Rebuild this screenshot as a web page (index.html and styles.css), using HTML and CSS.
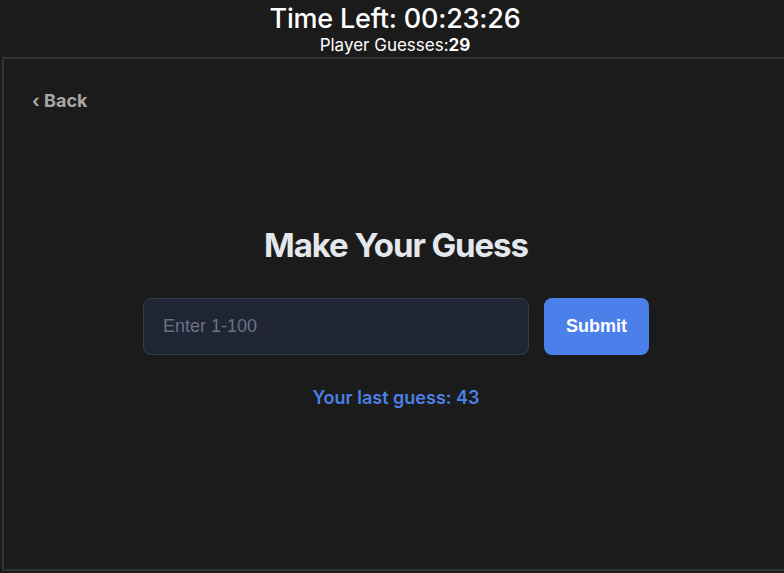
FILE: index.html
```html
<!DOCTYPE html>
<html lang="en">
<head>
  <meta charset="UTF-8">
  <meta name="viewport" content="width=device-width, initial-scale=1.0">
  <title>Guess the Number</title>
  <link rel="stylesheet" href="styles.css">
</head>
<body>
  <div class="page">
    <header class="status-bar">
      <div class="timer">Time Left: 00:23:26</div>
      <div class="guesses">Player Guesses:<strong>29</strong></div>
    </header>

    <main class="panel">
      <a class="back" href="#">&#8249; Back</a>

      <section class="guess-box">
        <h1>Make Your Guess</h1>
        <form class="guess-form">
          <input type="text" placeholder="Enter 1-100">
          <button type="submit">Submit</button>
        </form>
        <p class="last-guess">Your last guess: 43</p>
      </section>
    </main>
  </div>
</body>
</html>
```

FILE: styles.css
```css
html, body {
  margin: 0;
  padding: 0;
  overflow: hidden;
}

body {
  background-color: #1b1b1b;
  color: #fff;
  font-family: Inter, "Liberation Sans", sans-serif;
}

.page {
  width: 790px;
}

.status-bar {
  text-align: center;
  padding-top: 2px;
  height: 57px;
  box-sizing: border-box;
}

.timer {
  font-size: 27px;
  font-weight: 500;
  line-height: 33px;
  letter-spacing: -0.2px;
}

.guesses {
  font-size: 17px;
  line-height: 21px;
}

.guesses strong {
  font-weight: 700;
}

.panel {
  margin-left: 2px;
  height: 514px;
  border: 2px solid #323232;
  box-sizing: border-box;
  padding: 31px 28px;
}

.back {
  display: inline-block;
  color: #a7a7a7;
  font-size: 18px;
  font-weight: 700;
  text-decoration: none;
}

.guess-box {
  display: flex;
  flex-direction: column;
  align-items: center;
  margin-top: 114px;
}

h1 {
  margin: 0;
  font-size: 33px;
  font-weight: 700;
  letter-spacing: -1.1px;
  color: #e4e7ec;
}

.guess-form {
  display: flex;
  gap: 15px;
  margin-top: 33px;
}

input {
  width: 386px;
  height: 57px;
  box-sizing: border-box;
  padding: 0 19px;
  background-color: #1f2535;
  border: 1px solid #353c4b;
  border-radius: 8px;
  color: #e4e7ec;
  font-family: "Liberation Sans", Arial, sans-serif;
  font-size: 18px;
  outline: none;
}

input::placeholder {
  color: #6b7280;
}

button {
  width: 105px;
  height: 57px;
  border: none;
  border-radius: 8px;
  background-color: #4b80eb;
  color: #fff;
  font-family: "Liberation Sans", Arial, sans-serif;
  font-size: 18px;
  font-weight: 700;
  cursor: pointer;
}

.last-guess {
  margin: 32px 0 0;
  color: #4b80e6;
  font-size: 18px;
  font-weight: 600;
}
```
